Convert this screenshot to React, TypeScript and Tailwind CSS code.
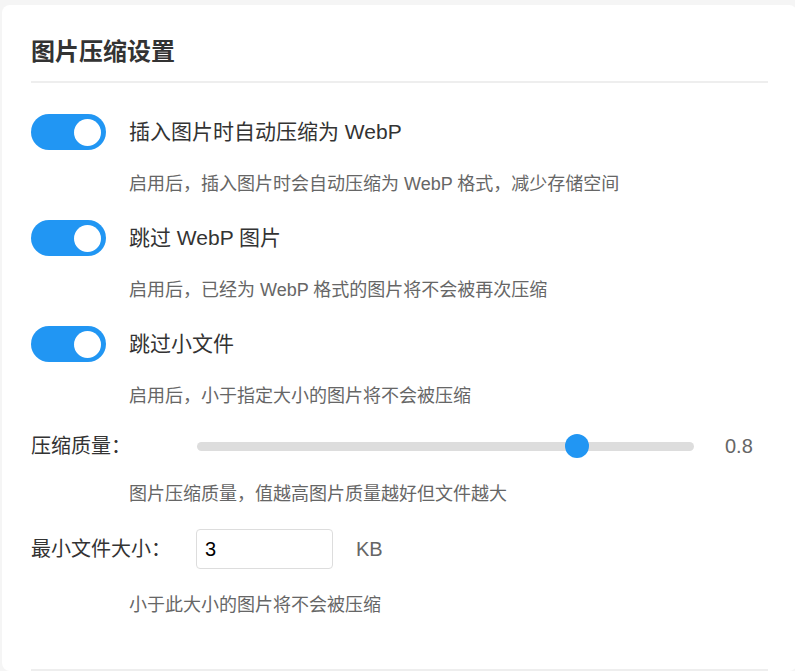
import React from 'react';

const font = { fontFamily: '"Liberation Sans", "Noto Sans CJK SC", sans-serif' };

function Toggle({ on = true }: { on?: boolean }) {
  return (
    <div
      className={`relative w-[75px] h-[36px] rounded-full shrink-0 ${on ? 'bg-[#2196f3]' : 'bg-[#ccc]'}`}
    >
      <div className="absolute top-[4.5px] right-[5px] w-[27px] h-[27px] rounded-full bg-white" />
    </div>
  );
}

function SwitchItem({ label, desc }: { label: string; desc: string }) {
  return (
    <div className="flex flex-col mb-[22px]">
      <div className="flex items-center h-[36px]">
        <Toggle />
        <span className="ml-[23px] text-[21px] leading-[36px] text-[#333]">{label}</span>
      </div>
      <p className="mt-[20px] ml-[98px] text-[18px] leading-[28px] text-[#666]">{desc}</p>
    </div>
  );
}

export default function App() {
  const quality = 0.8;
  const pct = ((quality - 0.1) / 0.9) * 100;

  return (
    <div className="w-[795px] h-[671px] overflow-hidden bg-[#f5f5f5]" style={font}>
      <div className="ml-[2px] mt-[5px] w-[795px] bg-white rounded-[8px] pt-[31px] px-[29px]">
        <h2 className="text-[24px] leading-[32px] font-bold text-[#333] pb-[13px] border-b-2 border-[#eee]">
          图片压缩设置
        </h2>

        <div className="pt-[31px] flex flex-col">
          <SwitchItem
            label="插入图片时自动压缩为 WebP"
            desc="启用后，插入图片时会自动压缩为 WebP 格式，减少存储空间"
          />
          <SwitchItem
            label="跳过 WebP 图片"
            desc="启用后，已经为 WebP 格式的图片将不会被再次压缩"
          />
          <SwitchItem
            label="跳过小文件"
            desc="启用后，小于指定大小的图片将不会被压缩"
          />

          <div className="flex items-center h-[36px] -mt-[4px]">
            <span className="w-[166px] shrink-0 text-[20px] leading-[36px] text-[#333]">压缩质量：</span>
            <div className="relative flex-1 h-[9px] rounded-full bg-[#ddd]">
              <div
                className="absolute top-1/2 w-[24px] h-[24px] -mt-[12px] -ml-[12px] rounded-full bg-[#2196f3]"
                style={{ left: `calc(12px + (100% - 24px) * ${pct / 100})` }}
              />
            </div>
            <span className="ml-[31px] w-[43px] text-[20px] leading-[36px] text-[#666]">{quality}</span>
          </div>
          <p className="mt-[16px] ml-[98px] text-[18px] leading-[28px] text-[#666]">
            图片压缩质量，值越高图片质量越好但文件越大
          </p>

          <div className="flex items-center h-[40px] mt-[21px]">
            <span className="w-[165px] shrink-0 text-[20px] leading-[40px] text-[#333]">最小文件大小：</span>
            <input
              type="number"
              defaultValue={3}
              className="w-[137px] h-[40px] border border-[#ddd] rounded-[4px] pl-[8px] text-[20px] text-black outline-none"
            />
            <span className="ml-[23px] text-[20px] leading-[40px] text-[#666]">KB</span>
          </div>
          <p className="mt-[22px] ml-[98px] text-[18px] leading-[28px] text-[#666]">
            小于此大小的图片将不会被压缩
          </p>
        </div>

        <div className="mt-[50px] border-b-2 border-[#eee]" />
      </div>
    </div>
  );
}
